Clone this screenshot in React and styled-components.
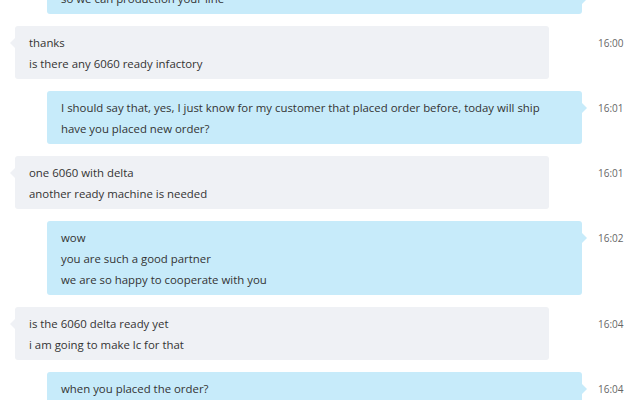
import React from 'react'
import styled, { createGlobalStyle } from 'styled-components'

const Global = createGlobalStyle`
  html, body { margin: 0; padding: 0; background: #fff; overflow: hidden; }
  body { font-family: "Open Sans", "Noto Sans", sans-serif; }
`

const messages = [
  { out: true, time: '', lines: ['so we can production your line'] },
  { out: false, time: '16:00', lines: ['thanks', 'is there any 6060 ready infactory'] },
  { out: true, time: '16:01', lines: ['I should say that, yes, I just know for my customer that placed order before, today will ship', 'have you placed new order?'] },
  { out: false, time: '16:01', lines: ['one 6060 with delta', 'another ready machine is needed'] },
  { out: true, time: '16:02', lines: ['wow', 'you are such a good partner', 'we are so happy to cooperate with you'] },
  { out: false, time: '16:04', lines: ['is the 6060 delta ready yet', 'i am going to make lc for that'] },
  { out: true, time: '16:04', lines: ['when you placed the order?'] },
]

function App() {
  return (
    <>
      <Global />
      <Chat>
        {messages.map((m, i) => (
          <Row key={i}>
            <Bubble out={m.out}>
              {m.lines.map((l, j) => <Line key={j}>{l}</Line>)}
            </Bubble>
            <Time>{m.time}</Time>
          </Row>
        ))}
      </Chat>
    </>
  )
}

export default App

const Chat = styled.div`
  width: 632px;
  height: 418px;
  display: flex;
  flex-direction: column;
  gap: 12px;
  margin-top: -18px;
`

const Row = styled.div`
  display: grid;
  grid-template-columns: 582px 1fr;
  align-items: start;
`

const Bubble = styled.div`
  position: relative;
  margin-left: ${p => (p.out ? '47px' : '15px')};
  margin-right: ${p => (p.out ? '0' : '33px')};
  background: ${p => (p.out ? '#c7ebfa' : '#eff1f5')};
  border-radius: 3px;
  padding: 6px 14px 5px;
  color: #333;
  &::after {
    content: '';
    position: absolute;
    top: 12px;
    ${p => (p.out ? 'right: -5px;' : 'left: -5px;')}
    border-top: 5px solid transparent;
    border-bottom: 5px solid transparent;
    ${p => (p.out ? 'border-left: 5px solid #c7ebfa;' : 'border-right: 5px solid #eff1f5;')}
  }
`

const Line = styled.div`
  font-size: 11.4px;
  line-height: 21px;
  white-space: nowrap;
`

const Time = styled.div`
  padding-left: 16px;
  padding-top: 10px;
  font-size: 10px;
  line-height: 14px;
  color: #666;
`
